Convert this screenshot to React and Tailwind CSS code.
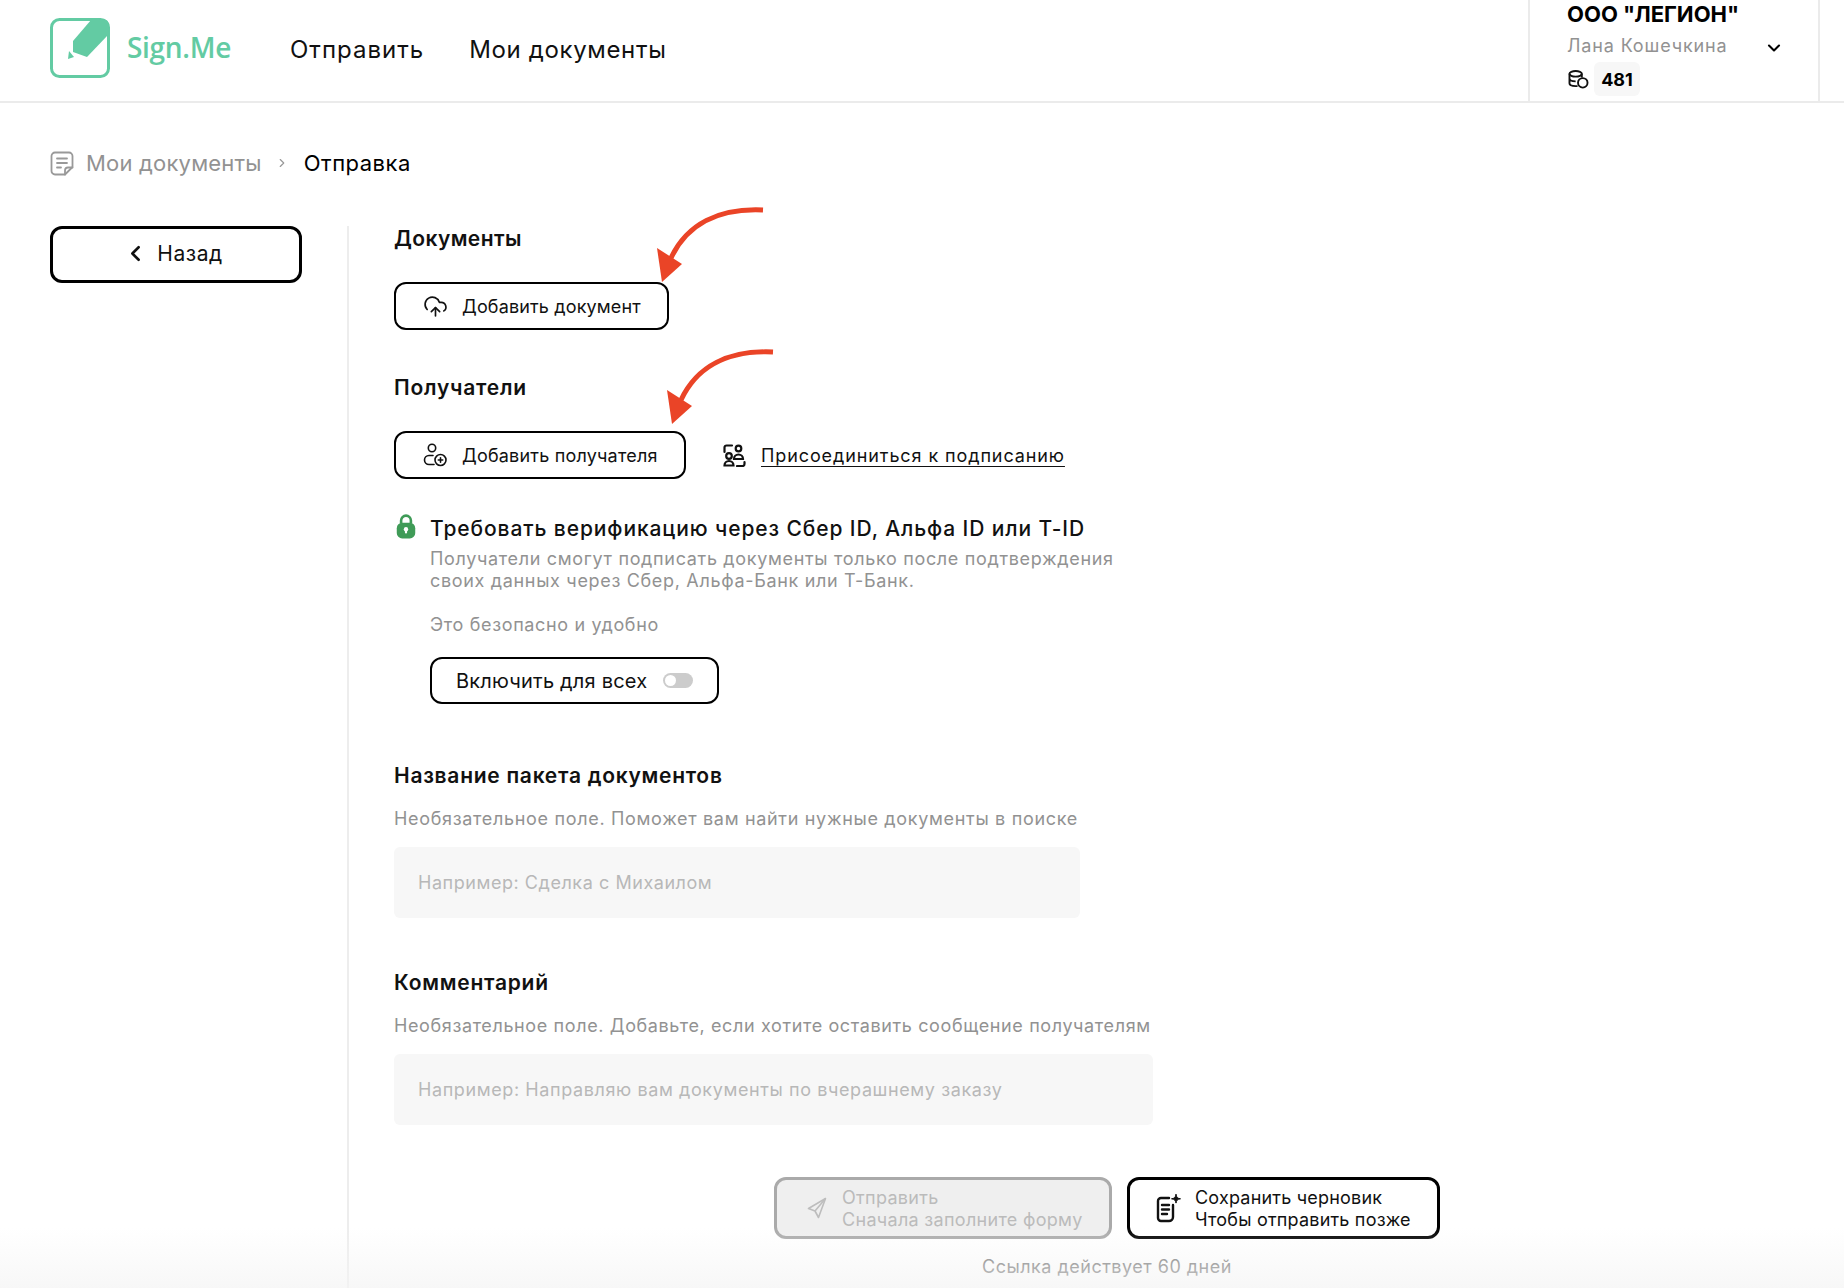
import React from 'react';
import { ChevronDown, ChevronLeft, ChevronRight, CloudUpload } from 'lucide-react';

function Logo() {
    return (
        <svg width="60" height="60" viewBox="0 0 60 60" fill="none">
            <rect x="1.500" y="1.500" width="57" height="57" rx="8" stroke="#63cba3" strokeWidth="3" />
            <path d="M23 23 L41 2 L52 1 Q59 1 59 8 L58 17 L37 39 L23 34 Z" fill="#63cba3" />
            <path d="M19 33 L24 39 L18 41 Z" fill="#63cba3" />
        </svg>
    );
}

function DocIcon() {
    return (
        <svg width="25" height="25" viewBox="0 0 25 25" fill="none" stroke="#999" strokeWidth="1.800" strokeLinecap="round" strokeLinejoin="round">
            <path d="M15 23.500H5a3.500 3.500 0 0 1-3.500-3.500V5A3.500 3.500 0 0 1 5 1.500h14A3.500 3.500 0 0 1 22.500 5v11z" />
            <path d="M15 23.500v-4a3 3 0 0 1 3-3h4.500" />
            <path d="M7 7.500h10M7 12h10M7 16.500h4" />
        </svg>
    );
}

function CoinsIcon() {
    return (
        <svg width="21" height="19" viewBox="0 0 22 20" fill="none" stroke="#111" strokeWidth="2">
            <ellipse cx="8" cy="4" rx="6.500" ry="3" />
            <path d="M1.500 4v10c0 1.700 2.900 3 6.500 3h2M1.500 9c0 1.700 2.900 3 6.500 3M14.500 4v4" />
            <circle cx="15.500" cy="13.500" r="5" fill="#fff" />
        </svg>
    );
}

function UserPlusIcon() {
    return (
        <svg width="25" height="25" viewBox="0 0 25 25" fill="none" stroke="#111" strokeWidth="1.600" strokeLinecap="round">
            <circle cx="9" cy="5" r="3.700" />
            <path d="M10 12.500H6a4.500 4.500 0 0 0 0 9h5" />
            <circle cx="17.500" cy="17" r="5.500" />
            <path d="M17.500 14.800v4.400M15.300 17h4.400" />
        </svg>
    );
}

function JoinIcon() {
    return (
        <svg width="23" height="23" viewBox="0 0 23 23" fill="none" stroke="#111" strokeWidth="2.200" strokeLinecap="round">
            <path d="M1.500 8V3.500a2 2 0 0 1 2-2H9M21.500 18v2a2 2 0 0 1-2 2H14" />
            <circle cx="15.500" cy="4.500" r="2.800" />
            <path d="M11 15a4.500 4.500 0 0 1 9 0z" />
            <circle cx="6" cy="12" r="2.800" />
            <path d="M1.500 21.500a4.500 4.500 0 0 1 9 0z" />
        </svg>
    );
}

function LockIcon() {
    return (
        <svg width="20" height="25" viewBox="0 0 18 23" fill="none">
            <path d="M4.500 9V6a4.500 4.500 0 0 1 9 0v3" stroke="#3f9b57" strokeWidth="2.400" />
            <rect x="0.500" y="8" width="17" height="14.500" rx="5" fill="#3f9b57" />
            <circle cx="9" cy="14" r="2" fill="#fff" />
            <rect x="8" y="14" width="2" height="4" rx="1" fill="#fff" />
        </svg>
    );
}

function PlaneIcon() {
    return (
        <svg width="20" height="22" viewBox="0 0 20 22" fill="none" stroke="#bdbdbd" strokeWidth="1.600" strokeLinejoin="round">
            <path d="M18.500 1.500 1.500 11.500l6.500 2.500 3.500 6.500z" />
            <path d="M18.500 1.500 8 14" />
        </svg>
    );
}

function DraftIcon() {
    return (
        <svg width="25" height="29" viewBox="0 0 25 29" fill="none" stroke="#111" strokeWidth="2.400" strokeLinecap="round">
            <path d="M13 4H5a3 3 0 0 0-3 3v17a3 3 0 0 0 3 3h8a4 4 0 0 0 4-4V11" />
            <path d="M6 11h7M6 15.500h7M6 20h5" />
            <path d="M20 0.500c.4 2.800 1.500 3.900 4.500 4.300-3 .4-4.100 1.500-4.500 4.300-.4-2.800-1.500-3.900-4.500-4.300 3-.4 4.100-1.500 4.500-4.300z" fill="#111" strokeWidth="1" />
        </svg>
    );
}

function Arrow({ className }) {
    return (
        <svg className={className} width="112" height="76" viewBox="0 0 112 76" fill="none">
            <path d="M108 4C64 2 32 18 16 52" stroke="#ea4427" strokeWidth="5" />
            <path d="M2 42 L27 58 L7 76 Z" fill="#ea4427" />
        </svg>
    );
}

function OutlineButton({ icon, children, className }) {
    return (
        <button className={`flex h-[48px] items-center rounded-xl border-2 border-black bg-white text-[18px] text-[#111] ${className}`}>
            {icon}
            {children}
        </button>
    );
}

export default function App() {
    return (
        <div className="relative h-screen w-full overflow-hidden bg-white font-['Inter','Liberation_Sans',sans-serif] text-[#111]">
            <header className="flex h-[103px] items-start border-b-2 border-[#ebebeb] pl-[50px]">
                <div className="mt-[18px] flex items-start">
                    <Logo />
                    <span className="ml-[17px] mt-[10px] font-['Open_Sans',sans-serif] text-[28px] font-semibold leading-[38px] tracking-[-0.3px] text-[#63cba3]">Sign.Me</span>
                </div>
                <nav className="ml-[59px] mt-[34px] flex gap-[45px] text-[24px] leading-[32px]">
                    <a className="tracking-[1px]">Отправить</a>
                    <a className="tracking-[0.65px]">Мои документы</a>
                </nav>
                <div className="relative ml-auto mr-[24px] flex h-full w-[292px] flex-col border-x-2 border-[#ebebeb] pl-[37px]">
                    <div className="mt-[1px] text-[22px] font-bold leading-[27px] text-black">ООО "ЛЕГИОН"</div>
                    <div className="mt-[6px] text-[18px] leading-[24px] tracking-[0.85px] text-[#929292]">Лана Кошечкина</div>
                    <div className="mt-[4px] flex items-center">
                        <span className="ml-[1px]"><CoinsIcon /></span>
                        <span className="ml-[5px] flex h-[34px] w-[46px] items-center justify-center rounded-md bg-[#f7f7f7] text-[18px] font-bold text-black">481</span>
                    </div>
                    <ChevronDown className="absolute left-[234px] top-[38px] text-black" size={20} strokeWidth={2.500} />
                </div>
            </header>

            <div className="ml-[50px] mt-[46px] flex h-[28px] items-center text-[22px] leading-[28px] tracking-[0.2px]">
                <DocIcon />
                <span className="ml-[11px] text-[#929292]">Мои документы</span>
                <ChevronRight className="ml-[13px] text-[#999]" size={14} />
                <span className="ml-[15px] tracking-[0.5px] text-black">Отправка</span>
            </div>

            <div className="ml-[50px] mt-[49px] flex">
                <button className="flex h-[57px] w-[252px] items-center justify-center rounded-xl border-[3px] border-black bg-white pb-[2px] pr-[6px] text-[21px] tracking-[0.5px]">
                    <ChevronLeft size={25} strokeWidth={2.500} className="mr-[9px]" />
                    Назад
                </button>
                <div className="ml-[45px] h-[1100px] w-[2px] bg-[#ededed]" />

                <main className="relative ml-[45px] w-[1100px]">
                    <h2 className="mt-[-1px] text-[21px] font-semibold leading-[28px] tracking-[0.4px]">Документы</h2>
                    <Arrow className="absolute left-[261px] top-[-20px]" />
                    <OutlineButton className="mt-[29px] w-[275px] pl-[27px]" icon={<CloudUpload size={25} strokeWidth={1.600} className="mr-[14px]" />}>
                        <span className="tracking-[0.15px]">Добавить документ</span>
                    </OutlineButton>

                    <h2 className="mt-[44px] text-[21px] font-semibold leading-[28px] tracking-[0.8px]">Получатели</h2>
                    <Arrow className="absolute left-[271px] top-[122px]" />
                    <div className="mt-[29px] flex items-center">
                        <OutlineButton className="w-[292px] pl-[27px]" icon={<UserPlusIcon />}>
                            <span className="ml-[14px] tracking-[0.2px]">Добавить получателя</span>
                        </OutlineButton>
                        <span className="ml-[37px]"><JoinIcon /></span>
                        <a className="ml-[15px] text-[18px] tracking-[0.9px] underline underline-offset-4">Присоединиться к подписанию</a>
                    </div>

                    <div className="mt-[36px] flex">
                        <span className="ml-[2px] mt-[-1px] w-[34px]"><LockIcon /></span>
                        <div>
                            <div className="text-[21px] font-medium leading-[28px] tracking-[0.9px]">Требовать верификацию через Сбер ID, Альфа ID или T-ID</div>
                            <p className="mt-[5px] w-[700px] text-[18px] leading-[22px] tracking-[0.67px] text-[#929292]">
                                Получатели смогут подписать документы только после подтверждения своих данных через Сбер, Альфа-Банк или Т-Банк.
                            </p>
                            <p className="mt-[22px] text-[18px] leading-[22px] tracking-[0.65px] text-[#929292]">Это безопасно и удобно</p>
                            <button className="relative mt-[21px] flex h-[47px] w-[289px] items-center rounded-xl border-2 border-black bg-white pl-[24px] text-[20px] tracking-[0.2px]">
                                Включить для всех
                                <span className="absolute left-[231px] flex h-[15px] w-[30px] items-center rounded-full bg-[#cccccc] pl-[2px]">
                                    <span className="h-[11px] w-[11px] rounded-full bg-white" />
                                </span>
                            </button>
                        </div>
                    </div>

                    <h2 className="mt-[58px] text-[21px] font-semibold leading-[28px] tracking-[0.72px]">Название пакета документов</h2>
                    <p className="mt-[18px] text-[18px] leading-[22px] tracking-[0.68px] text-[#929292]">Необязательное поле. Поможет вам найти нужные документы в поиске</p>
                    <div className="mt-[17px] flex h-[71px] w-[686px] items-center rounded-md bg-[#f7f7f7] pl-[24px] text-[18px] tracking-[0.55px] text-[#b8b8b8]">
                        Например: Сделка с Михаилом
                    </div>

                    <h2 className="mt-[51px] text-[21px] font-semibold leading-[28px] tracking-[0.75px]">Комментарий</h2>
                    <p className="mt-[18px] text-[18px] leading-[22px] tracking-[0.62px] text-[#929292]">Необязательное поле. Добавьте, если хотите оставить сообщение получателям</p>
                    <div className="mt-[17px] flex h-[71px] w-[759px] items-center rounded-md bg-[#f7f7f7] pl-[24px] text-[18px] tracking-[0.6px] text-[#b8b8b8]">
                        Например: Направляю вам документы по вчерашнему заказу
                    </div>

                    <div className="ml-[380px] mt-[52px] flex gap-[15px]">
                        <button className="flex h-[62px] w-[338px] items-center rounded-xl border-[3px] border-[#aaaaaa] bg-[#efefef] pl-[30px] text-left text-[18px] leading-[22px] tracking-[0.3px] text-[#bbbbbb]">
                            <PlaneIcon />
                            <span className="ml-[15px] pt-[1px]">Отправить<br />Сначала заполните форму</span>
                        </button>
                        <button className="flex h-[62px] w-[313px] items-center rounded-xl border-[3px] border-black bg-white pl-[26px] text-left text-[18px] leading-[22px] tracking-[0.2px]">
                            <DraftIcon />
                            <span className="ml-[14px] pt-[1px]">Сохранить черновик<br />Чтобы отправить позже</span>
                        </button>
                    </div>
                    <p className="ml-[588px] mt-[16px] text-[18px] leading-[24px] tracking-[0.5px] text-[#707070]">Ссылка действует 60 дней</p>
                </main>
            </div>

            <div className="pointer-events-none absolute bottom-0 left-0 h-[60px] w-full bg-gradient-to-b from-white/0 to-[#f4f4f4]/70" />
        </div>
    );
}
